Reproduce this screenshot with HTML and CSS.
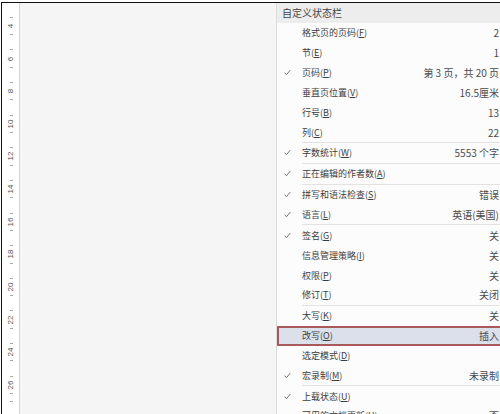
FILE: index.html
```html
<!DOCTYPE html>
<html lang="zh-CN">
<head>
<meta charset="utf-8">
<link rel="stylesheet" href="styles.css">
</head>
<body>
<div class="frame">
  <div class="ruler">
    <div class="unit"><i class="tick"></i><span class="num">4</span><i class="tick"></i></div>
    <div class="unit"><i class="tick"></i><span class="num">6</span><i class="tick"></i></div>
    <div class="unit"><i class="tick"></i><span class="num">8</span><i class="tick"></i></div>
    <div class="unit"><i class="tick"></i><span class="num">10</span><i class="tick"></i></div>
    <div class="unit"><i class="tick"></i><span class="num">12</span><i class="tick"></i></div>
    <div class="unit"><i class="tick"></i><span class="num">14</span><i class="tick"></i></div>
    <div class="unit"><i class="tick"></i><span class="num">16</span><i class="tick"></i></div>
    <div class="unit"><i class="tick"></i><span class="num">18</span><i class="tick"></i></div>
    <div class="unit"><i class="tick"></i><span class="num">20</span><i class="tick"></i></div>
    <div class="unit"><i class="tick"></i><span class="num">22</span><i class="tick"></i></div>
    <div class="unit"><i class="tick"></i><span class="num">24</span><i class="tick"></i></div>
    <div class="unit"><i class="tick"></i><span class="num">26</span><i class="tick"></i></div>
    <div class="unit"><i class="tick"></i></div>
  </div>
  <div class="doc"></div>
  <div class="menu">
    <div class="head">自定义状态栏</div>
    <div class="row"><span class="chk"></span><span class="lbl">格式页的页码(<u>F</u>)</span><span class="val">2</span></div>
    <div class="row"><span class="chk"></span><span class="lbl">节(<u>E</u>)</span><span class="val">1</span></div>
    <div class="row"><span class="chk"><svg viewBox="0 0 8 8"><polyline points="0.8,4.2 2.8,6.6 7.2,1.2"/></svg></span><span class="lbl">页码(<u>P</u>)</span><span class="val">第 3 页，共 20 页</span></div>
    <div class="row"><span class="chk"></span><span class="lbl">垂直页位置(<u>V</u>)</span><span class="val">16.5厘米</span></div>
    <div class="row"><span class="chk"></span><span class="lbl">行号(<u>B</u>)</span><span class="val">13</span></div>
    <div class="row"><span class="chk"></span><span class="lbl">列(<u>C</u>)</span><span class="val">22</span></div>
    <div class="sep"></div>
    <div class="row"><span class="chk"><svg viewBox="0 0 8 8"><polyline points="0.8,4.2 2.8,6.6 7.2,1.2"/></svg></span><span class="lbl">字数统计(<u>W</u>)</span><span class="val">5553 个字</span></div>
    <div class="sep"></div>
    <div class="row"><span class="chk"><svg viewBox="0 0 8 8"><polyline points="0.8,4.2 2.8,6.6 7.2,1.2"/></svg></span><span class="lbl">正在编辑的作者数(<u>A</u>)</span><span class="val"></span></div>
    <div class="sep"></div>
    <div class="row"><span class="chk"><svg viewBox="0 0 8 8"><polyline points="0.8,4.2 2.8,6.6 7.2,1.2"/></svg></span><span class="lbl">拼写和语法检查(<u>S</u>)</span><span class="val">错误</span></div>
    <div class="row"><span class="chk"><svg viewBox="0 0 8 8"><polyline points="0.8,4.2 2.8,6.6 7.2,1.2"/></svg></span><span class="lbl">语言(<u>L</u>)</span><span class="val">英语(美国)</span></div>
    <div class="sep"></div>
    <div class="row"><span class="chk"><svg viewBox="0 0 8 8"><polyline points="0.8,4.2 2.8,6.6 7.2,1.2"/></svg></span><span class="lbl">签名(<u>G</u>)</span><span class="val">关</span></div>
    <div class="row"><span class="chk"></span><span class="lbl">信息管理策略(<u>I</u>)</span><span class="val">关</span></div>
    <div class="row"><span class="chk"></span><span class="lbl">权限(<u>P</u>)</span><span class="val">关</span></div>
    <div class="row"><span class="chk"></span><span class="lbl">修订(<u>T</u>)</span><span class="val">关闭</span></div>
    <div class="sep"></div>
    <div class="row"><span class="chk"></span><span class="lbl">大写(<u>K</u>)</span><span class="val">关</span></div>
    <div class="row sel"><span class="chk"></span><span class="lbl">改写(<u>O</u>)</span><span class="val">插入</span></div>
    <div class="row"><span class="chk"></span><span class="lbl">选定模式(<u>D</u>)</span><span class="val"></span></div>
    <div class="row"><span class="chk"><svg viewBox="0 0 8 8"><polyline points="0.8,4.2 2.8,6.6 7.2,1.2"/></svg></span><span class="lbl">宏录制(<u>M</u>)</span><span class="val">未录制</span></div>
    <div class="sep"></div>
    <div class="row"><span class="chk"><svg viewBox="0 0 8 8"><polyline points="0.8,4.2 2.8,6.6 7.2,1.2"/></svg></span><span class="lbl">上载状态(<u>U</u>)</span><span class="val"></span></div>
    <div class="row"><span class="chk"></span><span class="lbl">可用的文档更新(<u>U</u>)</span><span class="val">否</span></div>
  </div>
</div>
</body>
</html>
```
FILE: styles.css
```css
html, body {
  margin: 0;
  padding: 0;
  background: #ffffff;
}
body {
  width: 500px;
  height: 414px;
  overflow: hidden;
  font-family: "Noto Sans CJK SC", "Noto Sans", sans-serif;
}
.frame {
  margin: 2px 0 0 1px;
  height: 411px;
  border-top: 1px solid #111;
  border-left: 1px solid #111;
  display: grid;
  grid-template-columns: 18px 256px 230px;
  overflow: hidden;
}
.ruler {
  background: #ffffff;
  border-right: 1px solid #d4d4d4;
  padding-top: 6.68px;
  display: flex;
  flex-direction: column;
  overflow: hidden;
}
.unit {
  flex: 0 0 32.64px;
  height: 32.64px;
  display: grid;
  grid-template-rows: 8.16px 16.32px 8.16px;
  justify-items: center;
  padding-left: 1px;
}
.tick {
  display: block;
  width: 3px;
  height: 1px;
  background: #a8a8a8;
}
.unit .tick:first-child {
  align-self: end;
}
.unit .tick:last-child {
  align-self: start;
}
.num {
  align-self: center;
  font-family: "Liberation Sans", sans-serif;
  font-size: 8px;
  line-height: 8px;
  color: #555;
  transform: rotate(-90deg);
  white-space: nowrap;
}
.doc {
  background: #f5f5f5;
}
.menu {
  background: #fcfcfc;
  border-left: 1px solid #dcdcdc;
  color: #3c3c3c;
  overflow: hidden;
}
.head {
  height: 20px;
  line-height: 20px;
  background: #ededed;
  padding-left: 5px;
  font-size: 10px;
  color: #444;
}
.row {
  height: 19.85px;
  display: grid;
  grid-template-columns: 25px 1fr auto;
  align-items: center;
  font-size: 9px;
  padding-right: 7px;
}
.row u {
  text-decoration: underline;
  text-underline-offset: 1px;
}
.chk {
  display: flex;
  align-items: center;
  padding-left: 7px;
}
.chk svg {
  width: 7px;
  height: 7px;
  fill: none;
  stroke: #707070;
  stroke-width: 1.1;
}
.lbl {
  white-space: nowrap;
}
.val {
  white-space: nowrap;
  text-align: right;
  font-size: 10px;
  color: #4a4a4a;
}
.sep {
  height: 1px;
  margin-left: 25px;
  background: #e2e2e2;
}
.row.sel {
  background: #dbe0ea;
  box-shadow: inset 0 0 0 2px #a85a5a;
}
```
